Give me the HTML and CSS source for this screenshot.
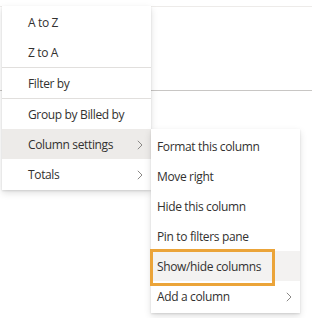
FILE: index.html
```
<!DOCTYPE html>
<html>
<head>
<meta charset="utf-8">
<link rel="stylesheet" href="styles.css">
</head>
<body>
<div class="page">
  <div class="rule-top"></div>
  <div class="header-space"></div>
  <div class="rule-header"></div>
</div>

<div class="menu main">
  <div class="item">A to Z</div>
  <div class="item">Z to A</div>
  <div class="divider"></div>
  <div class="item">Filter by</div>
  <div class="divider"></div>
  <div class="item">Group by Billed by</div>
  <div class="item active"><span>Column settings</span><svg class="chev" width="6" height="10" viewBox="0 0 6 10"><path d="M0.8 0.8 L5 5 L0.8 9.2" fill="none" stroke="#8a8886" stroke-width="1"/></svg></div>
  <div class="item"><span>Totals</span><svg class="chev" width="6" height="10" viewBox="0 0 6 10"><path d="M0.8 0.8 L5 5 L0.8 9.2" fill="none" stroke="#8a8886" stroke-width="1"/></svg></div>
</div>

<div class="menu sub">
  <div class="item">Format this column</div>
  <div class="item">Move right</div>
  <div class="item">Hide this column</div>
  <div class="item">Pin to filters pane</div>
  <div class="item active">Show/hide columns</div>
  <div class="item"><span>Add a column</span><svg class="chev" width="6" height="10" viewBox="0 0 6 10"><path d="M0.8 0.8 L5 5 L0.8 9.2" fill="none" stroke="#8a8886" stroke-width="1"/></svg></div>
</div>

<div class="callout"></div>
</body>
</html>
```
FILE: styles.css
```
* { box-sizing: border-box; }
html, body { margin: 0; padding: 0; background: #ffffff; }
body {
  width: 312px;
  height: 318px;
  position: relative;
  overflow: hidden;
  font-family: "Open Sans", "Noto Sans", sans-serif;
  font-size: 12px;
  letter-spacing: -0.35px;
  color: #323130;
}
.page { display: flex; flex-direction: column; }
.rule-top { margin-top: 6px; height: 1px; background: #edebe9; }
.header-space { height: 83px; }
.rule-header { height: 1px; background: #c8c6c4; }

.menu {
  position: absolute;
  background: #ffffff;
  box-shadow: 0 3px 7px rgba(0,0,0,0.13), 0 0.6px 1.8px rgba(0,0,0,0.11);
  display: flex;
  flex-direction: column;
}
.main { left: 2px; top: 6px; width: 149px; padding: 1px 0 1px; }
.sub { left: 151px; top: 129px; width: 149px; padding: 2px 0 2px; }

.item {
  height: 30px;
  padding-top: 1px;
  display: flex;
  align-items: center;
  justify-content: space-between;
  white-space: nowrap;
}
.main .item { padding-left: 26px; padding-right: 8px; }
.sub .item { padding-left: 6px; padding-right: 8px; }
.item.active { background: #edebe9; }
.sub .item.active { background: #f3f2f1; }
.divider { height: 1px; background: #e1dfdd; }
.chev { display: block; }

.callout {
  position: absolute;
  left: 150px;
  top: 249px;
  width: 125px;
  height: 37px;
  border: 3px solid #eba439;
}
```
